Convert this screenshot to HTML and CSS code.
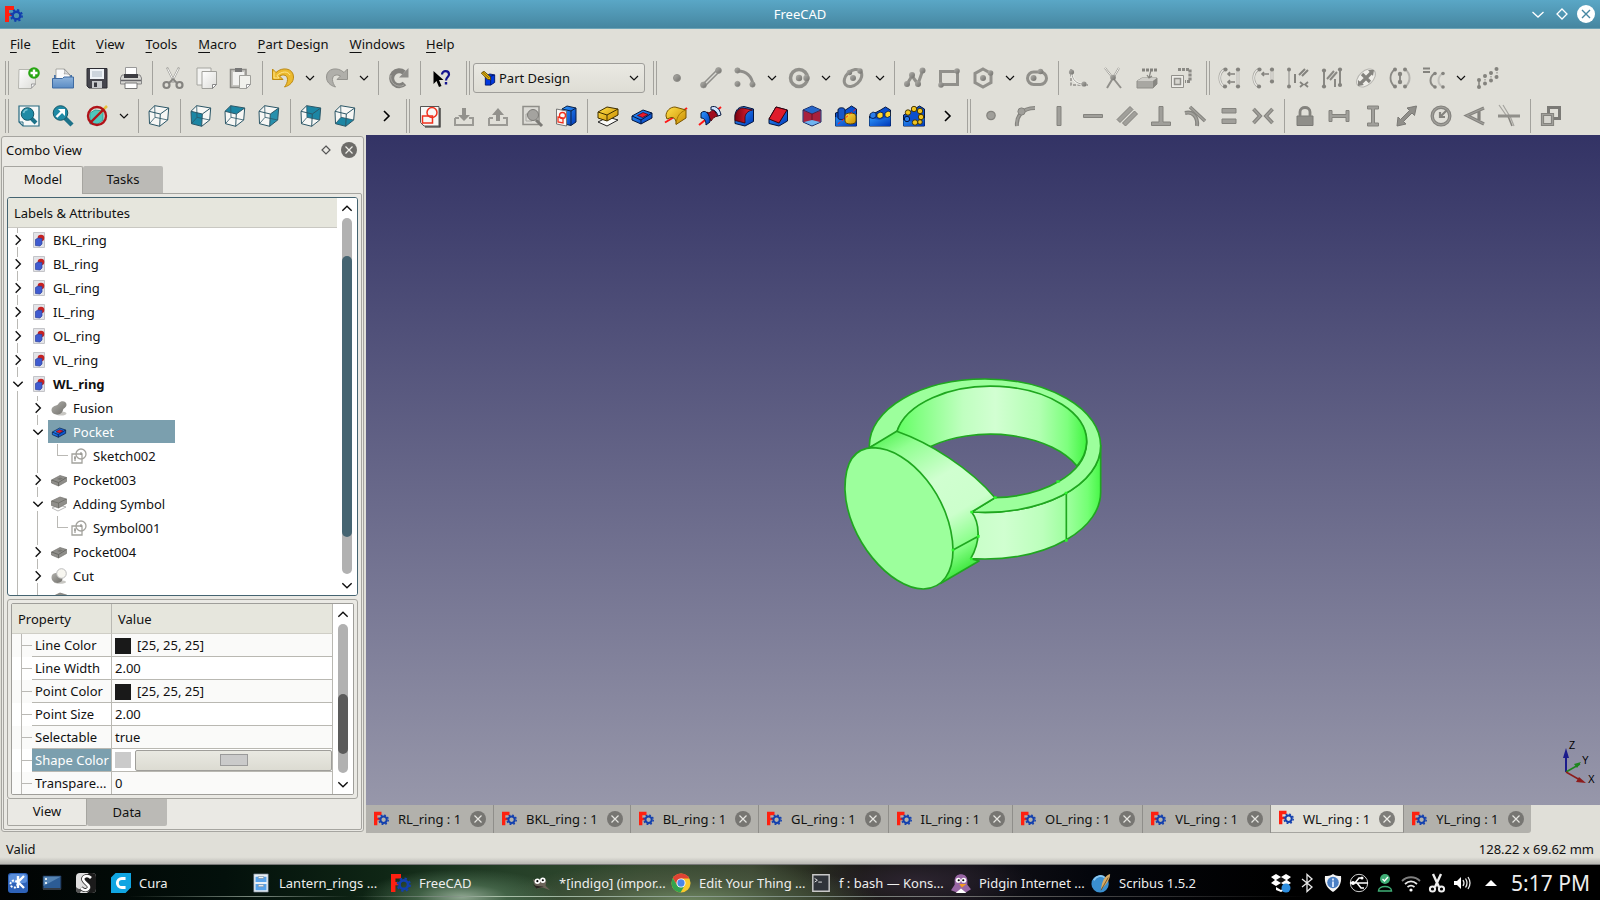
FILE: index.html
```html
<!DOCTYPE html>
<html lang="en">
<head>
<meta charset="utf-8">
<title>FreeCAD</title>
<link rel="stylesheet" href="styles.css">
</head>
<body>
<svg class="sprite" aria-hidden="true">
  <defs>
    <linearGradient id="g-blue" x1="0" y1="0" x2="1" y2="1"><stop offset="0" stop-color="#2f9bff"/><stop offset="1" stop-color="#0037b8"/></linearGradient>
    <linearGradient id="g-gold" x1="0" y1="0" x2="1" y2="1"><stop offset="0" stop-color="#ffe04a"/><stop offset="1" stop-color="#c98c00"/></linearGradient>
    <linearGradient id="g-red" x1="0" y1="0" x2="1" y2="0"><stop offset="0" stop-color="#7a0010"/><stop offset="1" stop-color="#f02838"/></linearGradient>
    <linearGradient id="g-grey" x1="0" y1="0" x2="1" y2="1"><stop offset="0" stop-color="#b2b1ac"/><stop offset="1" stop-color="#6f6e6a"/></linearGradient>
    <linearGradient id="g-page" x1="0" y1="0" x2="1" y2="1"><stop offset="0" stop-color="#fff"/><stop offset="1" stop-color="#dcdcd8"/></linearGradient>
    <linearGradient id="g-folder" x1="0" y1="0" x2="0" y2="1"><stop offset="0" stop-color="#8fb4dc"/><stop offset="1" stop-color="#5b8cc4"/></linearGradient>
    <g id="wire">
      <path d="M7.700 1.700 21.700 4 20.700 16 12.700 22.300 2.500 19.700 2 7.300z" fill="#fff" fill-opacity=".75"/>
    </g>
    <g id="edges" fill="none" stroke="#2c5767" stroke-width="1" stroke-linejoin="round">
      <path d="M7.700 1.700 21.700 4 20.700 16 12.700 22.300 2.500 19.700 2 7.300zM2 7.300 13.300 10 21.700 4M13.300 10 12.700 22.300"/>
      <path d="M7.700 1.700 8 13.300 20.700 16M8 13.300 2.500 19.700" stroke-width=".8"/>
    </g>
    <symbol id="freecad" viewBox="0 0 18 18"><path d="M0 1h9v4H4v3h3v3H4v6H0z" fill="#ff2010"/><circle cx="11.500" cy="10.500" r="3.800" fill="none" stroke="#123fae" stroke-width="2.400"/><circle cx="11.500" cy="10.500" r="5.600" fill="none" stroke="#123fae" stroke-width="1.700" stroke-dasharray="2.200 2.198"/></symbol>
    <symbol id="chev-d" viewBox="0 0 12 12"><path d="M2 4l4 4 4-4" fill="none" stroke="currentColor" stroke-width="1.200"/></symbol>
    <symbol id="chev-u" viewBox="0 0 12 12"><path d="M2 8l4-4 4 4" fill="none" stroke="currentColor" stroke-width="1.200"/></symbol>
    <symbol id="chev-r" viewBox="0 0 12 12"><path d="M4 2l4 4-4 4" fill="none" stroke="currentColor" stroke-width="1.200"/></symbol>
    <symbol id="more" viewBox="0 0 16 16"><path d="M5 3l5 5-5 5" fill="none" stroke="#000" stroke-width="1.600"/></symbol>
    <symbol id="close" viewBox="0 0 16 16"><circle cx="8" cy="8" r="8" fill="#6d6c69"/><path d="M4.500 4.500l7 7m0-7l-7 7" stroke="#f0efea" stroke-width="1.200"/></symbol>
    <symbol id="new" viewBox="0 0 24 24"><path d="M2 3.500h16.500V18l-4.500 4.500H1.500z" fill="url(#g-page)" stroke="#b5b5af"/><path d="M14 22.500c1-1 .5-3 .5-4.500h4z" fill="#fff" stroke="#999"/><circle cx="17" cy="7" r="5.800" fill="#27a611"/><path d="M17 3.500v7M13.500 7h7" stroke="#fff" stroke-width="2.400"/></symbol>
    <symbol id="open" viewBox="0 0 24 24"><path d="M3 9h18v12H3z" fill="#4673aa"/><path d="M5 13V3h8.500l5.500 6v5z" fill="#fafafa" stroke="#9a9a96" stroke-width=".8"/><path d="M13 3c1 2 1 4 0 5 2-.5 4 0 6 1z" fill="#ddd" stroke="#888" stroke-width=".6"/><path d="M1.500 12.500h10l1.500-1.500h9.500V22h-21z" fill="url(#g-folder)" stroke="#3f6ba2"/></symbol>
    <symbol id="save" viewBox="0 0 24 24"><path d="M2 2.500h20V22H4l-2-2z" fill="#45454d" stroke="#2c2c33"/><path d="M5 3h14v10H5z" fill="#eef2f6"/><path d="M7 6h10M7 8h10M7 10h10" stroke="#9aa8b8" stroke-width=".8"/><path d="M7 15h10v7H7z" fill="#c7c9cc"/><path d="M9 16.500h3V21H9z" fill="#3a3a42"/></symbol>
    <symbol id="print" viewBox="0 0 24 24"><path d="M6.500 1.500h11V10h-11z" fill="#fff" stroke="#999"/><path d="M3 9h18l1.500 3v6h-21v-6z" fill="#d6d6d2" stroke="#888"/><path d="M5 8h14v4H5z" fill="#3d3d42"/><path d="M6 17h12v5.500H6z" fill="#fff" stroke="#777"/><path d="M2 14.500h20" stroke="#66666a" stroke-width="1.500"/></symbol>
    <symbol id="cut" viewBox="0 0 24 24"><path d="M6 1.500l7.500 15M18 1.500l-7.500 15" stroke="#a3a29e" stroke-width="2.200"/><path d="M6.500 2.500l6.500 13M17.500 2.500l-6.500 13" stroke="#f4f4f2" stroke-width="1"/><circle cx="5.500" cy="19" r="3" fill="none" stroke="#858480" stroke-width="2.200"/><circle cx="18.500" cy="19" r="3" fill="none" stroke="#858480" stroke-width="2.200"/><path d="M8 17l4-4 4 4" stroke="#858480" stroke-width="1.800" fill="none"/></symbol>
    <symbol id="copy" viewBox="0 0 24 24"><path d="M2 2h14v17H2z" fill="#f3f3f1" stroke="#a5a5a0"/><path d="M7 5.500h14.500v13l-4 4H7z" fill="url(#g-page)" stroke="#a0a09b"/><path d="M17.500 22.500v-4h4z" fill="#fff" stroke="#888"/></symbol>
    <symbol id="paste" viewBox="0 0 24 24"><path d="M1.500 3.500H17v18H1.500z" fill="#c6c5c0" stroke="#8d8c87" stroke-width="1.500"/><path d="M4 6h11v13H4z" fill="#f2f2f0"/><path d="M6 2h7v4H6z" fill="#777"/><path d="M10.500 9.500h11v9l-4 4h-7z" fill="#f1f1ec" stroke="#a0a09b"/><path d="M17.500 22.500v-4h4z" fill="#fff" stroke="#999"/></symbol>
    <symbol id="undo" viewBox="0 0 24 24"><path d="M1.500 3v10.500H12L8.500 10c4-2 8-1 8 3.500 0 3-1.500 5.500-3 7.500 5.500-1.500 9-5 9-10C22.500 2 11 .5 5 6.500z" fill="#ecba2f" stroke="#bd8910" stroke-linejoin="round"/><path d="M3 5.500v6.500h5L6 9.500C11 5 17 5 19 9" fill="none" stroke="#ffe58b" stroke-width="1"/></symbol>
    <symbol id="redo" viewBox="0 0 24 24"><path d="M22.500 3v10.500H12l3.500-3.500c-4-2-8-1-8 3.500 0 3 1.500 5.500 3 7.500-5.500-1.500-9-5-9-10C1.500 2 13 .5 19 6.500z" fill="#b0afaa" stroke="#94938e" stroke-linejoin="round"/></symbol>
    <symbol id="refresh" viewBox="0 0 24 24"><path d="M17.500 17.500A7.500 7.500 0 1 1 17 6.500" fill="none" stroke="#82817d" stroke-width="5"/><path d="M21.500 2v9.500H12z" fill="#8e8d89"/><path d="M17 19A9 9 0 0 1 4 9" fill="none" stroke="#aaa9a4" stroke-width="1"/></symbol>
    <symbol id="whats" viewBox="0 0 24 24"><path d="M4.500 5v13l3-3 2.500 6 2.500-1-2.500-6h4.500z" fill="#000"/><path d="M13 8.500c0-4.500 7-4.500 7 0 0 2.500-3 2.500-3 6" fill="none" stroke="#12128e" stroke-width="2.200"/><path d="M15.800 16h2.400v2.500h-2.400z" fill="#12128e"/></symbol>
    <symbol id="pd" viewBox="0 0 18 18"><path d="M6 7l5-2.500 5.500 1V14L12 17H6z" fill="#0038e0" stroke="#001468"/><path d="M6 7h6v10M12 7l4.500-1.500" fill="none" stroke="#001468"/><path d="M1.500 3.500L4.500 1.500l7 6 .5 3.500-3.500-.5z" fill="#eab70e" stroke="#5b4400"/><path d="M3 2.500L10 9" stroke="#6c5000"/></symbol>
    <symbol id="point" viewBox="0 0 24 24"><circle cx="12" cy="12" r="3.500" fill="url(#g-grey)" stroke="#91908b"/></symbol>
    <symbol id="line" viewBox="0 0 24 24"><path d="M5 19L19.500 4.500" stroke="#8f8e8a" stroke-width="4.500"/><path d="M5 19L19.500 4.500" stroke="#dcdbd5" stroke-width="1.500"/><g fill="url(#g-grey)" stroke="#91908b" stroke-width=".6"><circle cx="4.500" cy="19" r="3"/><circle cx="19.500" cy="4.500" r="3"/></g></symbol>
    <symbol id="arc" viewBox="0 0 24 24"><path d="M5 5C13 5 19 10 20 19" fill="none" stroke="#8f8e8a" stroke-width="3"/><g fill="url(#g-grey)" stroke="#91908b" stroke-width=".6"><circle cx="4.500" cy="4.500" r="2.700"/><circle cx="19.500" cy="18.500" r="2.700"/><circle cx="4.500" cy="18" r="2.700"/></g></symbol>
    <symbol id="circle" viewBox="0 0 24 24"><circle cx="12" cy="12" r="8.500" fill="none" stroke="#91908b" stroke-width="3.500"/><g fill="url(#g-grey)"><circle cx="12" cy="12" r="3.200"/><circle cx="19.500" cy="12" r="3.200"/></g></symbol>
    <symbol id="ellipse" viewBox="0 0 24 24"><ellipse cx="12" cy="12" rx="10" ry="7" transform="rotate(-42 12 12)" fill="none" stroke="#91908b" stroke-width="3"/><g fill="url(#g-grey)"><circle cx="12" cy="12" r="3"/><circle cx="8.500" cy="6.500" r="2.700"/><circle cx="19" cy="5" r="2.700"/></g></symbol>
    <symbol id="poly" viewBox="0 0 24 24"><path d="M4 18L9 10l6 8 4.500-13" fill="none" stroke="#91908b" stroke-width="3"/><g fill="url(#g-grey)"><circle cx="4" cy="18" r="3"/><circle cx="9" cy="9" r="3"/><circle cx="15" cy="18" r="3"/><circle cx="19.500" cy="4.500" r="3"/></g></symbol>
    <symbol id="rect" viewBox="0 0 24 24"><path d="M3.500 5.500h17v13h-17z" fill="none" stroke="#91908b" stroke-width="3"/><g fill="url(#g-grey)"><circle cx="4" cy="19" r="2.800"/><circle cx="20" cy="5" r="2.800"/></g></symbol>
    <symbol id="hex" viewBox="0 0 24 24"><path d="M12 3l8 4.500v9L12 21l-8-4.500v-9z" fill="none" stroke="#91908b" stroke-width="3"/><g fill="url(#g-grey)"><circle cx="12" cy="12" r="3"/><circle cx="19.500" cy="7" r="2.800"/></g></symbol>
    <symbol id="slot" viewBox="0 0 24 24"><rect x="2.500" y="6" width="19" height="12.500" rx="6.200" fill="none" stroke="#91908b" stroke-width="3"/><g fill="url(#g-grey)"><circle cx="8.500" cy="12" r="3"/><circle cx="15.500" cy="5.500" r="2.800"/></g></symbol>
    <symbol id="filletsk" viewBox="0 0 24 24"><path d="M4 3v16h17" fill="none" stroke="#91908b" stroke-width="1.500" stroke-dasharray="3 1.500"/><path d="M5 7c0 7 5 11 11 11" fill="none" stroke="#f4f3ee" stroke-width="2.500"/><path d="M5 7c0 7 5 11 11 11" fill="none" stroke="#91908b" stroke-width=".8"/><g fill="url(#g-grey)"><circle cx="4.500" cy="6" r="2.600"/><circle cx="17" cy="18" r="2.600"/></g></symbol>
    <symbol id="trim" viewBox="0 0 24 24"><path d="M4 2l16 20M18 2L6 22" stroke="#91908b" stroke-width="2"/><path d="M4 2l8 10M18 2l-6 10" stroke="#f4f3ee" stroke-width="1"/><circle cx="12" cy="11.500" r="2.800" fill="url(#g-grey)"/></symbol>
    <symbol id="ext" viewBox="0 0 24 24"><path d="M2 15l5-3h15v6l-4 4H2z" fill="#a8a7a2" stroke="#8f8e89"/><path d="M2 15l5-3h15l-4 3z" fill="#cfcec9"/><path d="M18 15v7l4-4v-6z" fill="#888782"/><path d="M7 4h15" stroke="#84837e" stroke-width="3" stroke-dasharray="3 1"/><path d="M16 4l-2 8m-2-3l2 3 3-2" fill="none" stroke="#84837e" stroke-width="1.200"/></symbol>
    <symbol id="carbon" viewBox="0 0 24 24"><path d="M9 3.500h12v12h-5" fill="none" stroke="#8b8a85" stroke-width="3.200" stroke-dasharray="3 1"/><path d="M2.500 9.500h12v12h-12z" fill="#eeede8" stroke="#91908b"/><path d="M5.500 12.500h6v6h-6z" fill="#d8d7d1" stroke="#91908b" stroke-width="1.500"/></symbol>
    <symbol id="sel1" viewBox="0 0 24 24"><path d="M7 3C0 7 0 17 7 21M20 3v18" fill="none" stroke="#a5a49f" stroke-width="2.600"/><path d="M7 3C0 7 0 17 7 21M20 3v18" fill="none" stroke="#eeede8" stroke-width="1.200"/><path d="M10 8h7M10 16h7M12 6l-2 2 2 2M12 14l-2 2 2 2" fill="none" stroke="#84837e" stroke-width="1.600"/><g fill="#84837e"><circle cx="7.500" cy="3.500" r="2.100"/><circle cx="20" cy="3.500" r="2.100"/><circle cx="7" cy="20.500" r="2.100"/><circle cx="20" cy="20.500" r="2.100"/></g></symbol>
    <symbol id="sel2" viewBox="0 0 24 24"><path d="M7 3C0 7 0 17 7 21M20 3v12" fill="none" stroke="#a5a49f" stroke-width="2.600"/><path d="M7 3C0 7 0 17 7 21M20 3v12" fill="none" stroke="#eeede8" stroke-width="1.200"/><path d="M10 8h7M12 6l-2 2 2 2" fill="none" stroke="#84837e" stroke-width="1.600"/><g fill="#84837e"><circle cx="7.500" cy="3.500" r="2.100"/><circle cx="20" cy="3.500" r="2.100"/><circle cx="7" cy="20.500" r="2.100"/><circle cx="20" cy="15.500" r="2.100"/></g></symbol>
    <symbol id="sel3" viewBox="0 0 24 24"><path d="M3 3v18" stroke="#b5b4af" stroke-width="2"/><path d="M9 8v9M13 9l6-6M16 10l6-6" fill="none" stroke="#84837e" stroke-width="2"/><path d="M14 16l3 2.500-3 2.500M22 16l-3 2.500 3 2.500" fill="none" stroke="#84837e" stroke-width="1.800"/><g fill="#84837e"><circle cx="3" cy="3.500" r="2"/><circle cx="3" cy="20.500" r="2"/></g></symbol>
    <symbol id="sel4" viewBox="0 0 24 24"><path d="M4 4v17M20 3v16M15 13v8M7 13l7-8M10 14l7-8" fill="none" stroke="#8a8984" stroke-width="2"/><g fill="#84837e"><circle cx="4" cy="4.500" r="2.100"/><circle cx="4" cy="20.500" r="2.100"/><circle cx="20" cy="3.500" r="2.100"/><circle cx="20" cy="19" r="2.100"/></g></symbol>
    <symbol id="sel5" viewBox="0 0 24 24"><ellipse cx="12" cy="12" rx="11" ry="7" transform="rotate(-42 12 12)" fill="#efeee9" stroke="#b5b4af"/><path d="M6 18L18 6M8 8l8 8" stroke="#84837e" stroke-width="3.200"/><path d="M4 20v-6l6 5zM20 4h-6l5 6z" fill="#84837e"/></symbol>
    <symbol id="sel6" viewBox="0 0 24 24"><path d="M7 3C1 8 1 16 7 21" fill="none" stroke="#8a8984" stroke-width="1.800"/><path d="M17 3c6 5 6 13 0 18" fill="none" stroke="#b5b4af" stroke-width="2"/><path d="M12 8v8" stroke="#84837e" stroke-width="1.800"/><g fill="#84837e"><circle cx="7" cy="3.500" r="2"/><circle cx="17" cy="3.500" r="2"/><circle cx="7" cy="20.500" r="2"/><circle cx="17" cy="20.500" r="2"/><circle cx="12" cy="8" r="2.200"/><circle cx="12" cy="16" r="2.200"/></g></symbol>
    <symbol id="sel7" viewBox="0 0 24 24"><path d="M1 2.500h7M1 6h7" stroke="#84837e" stroke-width="2"/><path d="M13 7c-6 4-6 11 0 14" fill="none" stroke="#8a8984" stroke-width="2"/><path d="M21 7c-6 4-6 11 0 14" fill="none" stroke="#c3c2bd" stroke-width="2"/><g fill="#84837e"><circle cx="13" cy="7.500" r="1.800"/><circle cx="13" cy="21" r="1.800"/><circle cx="21" cy="7.500" r="1.800"/><circle cx="21" cy="21" r="1.800"/></g></symbol>
    <symbol id="sel8" viewBox="0 0 24 24"><path d="M3 14v7" stroke="#84837e" stroke-width="1.500"/><path d="M9 10v7M15 7v7M21 3v8" stroke="#84837e" stroke-dasharray="1.500 1.500"/><g fill="#84837e"><circle cx="3" cy="14" r="2"/><circle cx="3" cy="21" r="2"/><circle cx="9" cy="10" r="2"/><circle cx="9" cy="17.500" r="2"/><circle cx="15" cy="7" r="2"/><circle cx="15" cy="14.500" r="2"/><circle cx="20.500" cy="3" r="2"/><circle cx="20.500" cy="11" r="2"/></g></symbol>
    <symbol id="fit" viewBox="0 0 24 24"><path d="M2 2h20v20H6l-4-4z" fill="#f6f8f8" stroke="#266a80" stroke-width="1.200"/><path d="M2 18h4v4" fill="none" stroke="#266a80"/><path d="M14 14l5 5" stroke="#1d7289" stroke-width="4"/><circle cx="10.500" cy="10" r="6.300" fill="#1f8aa5" stroke="#175868"/><path d="M6.500 9a4.500 4.500 0 0 1 4-3.500" stroke="#7cc6d7" fill="none" stroke-width="1.500"/></symbol>
    <symbol id="zoomsel" viewBox="0 0 24 24"><path d="M14 14l7 7" stroke="#1d7289" stroke-width="4.500"/><circle cx="9.500" cy="9" r="7.300" fill="#1f8aa5" stroke="#175868"/><path d="M5.500 13l6-6" stroke="#fff" stroke-width="2.400"/><path d="M7 5h7v7z" fill="#fff"/></symbol>
    <symbol id="style" viewBox="0 0 24 24"><path d="M5 9l5-3 8 1v9l-5 4H5z" fill="#4fc6bd" stroke="#39a19b"/><path d="M14 10l8-8" stroke="#e7c23c" stroke-width="2.500"/><circle cx="12" cy="12" r="9" fill="none" stroke="#b01218" stroke-width="2.400"/><path d="M5.500 18.500l13-13" stroke="#b01218" stroke-width="2.400"/></symbol>
    <symbol id="iso" viewBox="0 0 24 24"><use href="#wire"/><use href="#edges"/></symbol>
    <symbol id="front" viewBox="0 0 24 24"><use href="#wire"/><path d="M2 7.300 13.300 10 12.700 22.300 2.500 19.700z" fill="#1c86a4"/><use href="#edges"/></symbol>
    <symbol id="top" viewBox="0 0 24 24"><use href="#wire"/><path d="M7.700 1.700 21.700 4 13.300 10 2 7.300z" fill="#1c86a4"/><use href="#edges"/></symbol>
    <symbol id="right" viewBox="0 0 24 24"><use href="#wire"/><path d="M21.700 4 20.700 16 12.700 22.300 13.300 10z" fill="#2790ad"/><use href="#edges"/></symbol>
    <symbol id="rear" viewBox="0 0 24 24"><use href="#wire"/><path d="M7.700 1.700 21.700 4 20.700 16 8 13.300z" fill="#1c86a4"/><use href="#edges"/></symbol>
    <symbol id="bottom" viewBox="0 0 24 24"><use href="#wire"/><path d="M8 13.300 20.700 16 12.700 22.300 2.500 19.700z" fill="#1c86a4"/><use href="#edges"/></symbol>
    <symbol id="sketch" viewBox="0 0 24 24"><path d="M2.500 2.500h18.500v19.500h-15l-3.500-3.500z" fill="#f7f7f5" stroke="#555"/><path d="M22 4v19H7" fill="none" stroke="#222" stroke-width="1.200"/><path d="M4.500 12h10v7h-10z" fill="none" stroke="#f0301c" stroke-width="1.500"/><circle cx="14" cy="8.500" r="5" fill="none" stroke="#f0301c" stroke-width="1.500"/></symbol>
    <symbol id="imp" viewBox="0 0 24 24"><path d="M3 14v7h18v-7h-4M3 14h4" fill="none" stroke="#9b9a95" stroke-width="2"/><path d="M10 4h4v7h4l-6 6-6-6h4z" fill="#92918c"/></symbol>
    <symbol id="exp" viewBox="0 0 24 24"><path d="M3 14v7h18v-7h-4M3 14h4" fill="none" stroke="#9b9a95" stroke-width="2"/><path d="M10 17h4v-6h4l-6-7-6 7h4z" fill="#92918c"/></symbol>
    <symbol id="viewsk" viewBox="0 0 24 24"><path d="M3 2.500h16v18H3z" fill="#dcdbd6" stroke="#8f8e89" stroke-width="1.500"/><path d="M6 10h6v7H6z" fill="none" stroke="#aaa9a4"/><path d="M16 16l6 6" stroke="#7b7a76" stroke-width="3"/><circle cx="13" cy="11" r="5.500" fill="#a4a39f" stroke="#7b7a76"/></symbol>
    <symbol id="mapsk" viewBox="0 0 24 24"><path d="M8 5l5-3 9 2v14l-5 3.500-9-2z" fill="url(#g-blue)" stroke="#0a2146"/><path d="M8 5l9 2 5-3M17 7v14" fill="none" stroke="#0a2146"/><path d="M2.500 5l10 2v15l-10-2z" fill="#f8f8f6" stroke="#777"/><path d="M4 13l5 1v5l-5-1z" fill="none" stroke="#f0301c" stroke-width="1.300"/><circle cx="8.500" cy="11.500" r="3" fill="none" stroke="#f0301c" stroke-width="1.300"/></symbol>
    <symbol id="pad" viewBox="0 0 24 24"><path d="M2 18l10-5 10 3-11 6z" fill="#fafaf8" stroke="#222"/><path d="M2 8l9-5 11 2v6l-11 6-9-3z" fill="url(#g-gold)" stroke="#3f2e00"/><path d="M2 8l9 3 11-6M11 11v6" fill="none" stroke="#3f2e00"/></symbol>
    <symbol id="pocket" viewBox="0 0 24 24"><path d="M2 12l11-6 9 3v5l-11 6-9-4z" fill="url(#g-blue)" stroke="#04163e"/><path d="M2 12l9 4 11-7M11 16v4" fill="none" stroke="#04163e"/><path d="M7.500 11.500l5.500-3 5 2-5.500 3z" fill="#e8192c" stroke="#54000a" stroke-width=".7"/></symbol>
    <symbol id="revol" viewBox="0 0 24 24"><path d="M1 18.500l10-6M15 10l8-6" stroke="#ff1616" stroke-width="2"/><path d="M2 12c0-5 4-9 9-9l11 3v8l-10 6.500c.5-5-2-7.500-5-7l-4 1.500z" fill="url(#g-gold)" stroke="#7a5500" stroke-linejoin="round"/><path d="M12 20c1-8 4-12 10-14" fill="none" stroke="#a37500"/></symbol>
    <symbol id="groove" viewBox="0 0 24 24"><path d="M1 21L23 3" stroke="#ff1616" stroke-width="2"/><path d="M9 8c2 2 5-1 6-3l5 7c-3 0-6 3-7 5z" fill="#a20d20" stroke="#4d000a"/><path d="M3 9c4-4 9 0 9 9l-4 3c0-5-2-7-5-7z" fill="url(#g-blue)" stroke="#04163e"/><path d="M13 3c5-2 9 2 10 8l-3 1c-1-4-4-7-7-6z" fill="#cfe4ff" stroke="#04163e"/></symbol>
    <symbol id="fil3" viewBox="0 0 24 24"><path d="M3 11c1-6 4-8 9-8.500l9.500 2.500v12.500L13 22 3 19.500z" fill="url(#g-blue)" stroke="#04163e"/><path d="M3 16.500V12c1-5 4-8 8-8l9.500 2c-5 1-7.500 4-7.500 8v5z" fill="url(#g-red)" stroke="#3c0008" stroke-width=".8"/></symbol>
    <symbol id="cham" viewBox="0 0 24 24"><path d="M3 15l7-12 11.500 3v11L13 22 3 19.500z" fill="url(#g-blue)" stroke="#04163e"/><path d="M3 15l7-12 11 3-8 13z" fill="#e01c2c" stroke="#3c0008"/></symbol>
    <symbol id="draft" viewBox="0 0 24 24"><path d="M3 6l9-4 9 4v12l-9 4-9-4z" fill="#2f64c4" stroke="#172c66"/><path d="M3.500 7l8.500 3 8.500-3v11l-8.500 1-8.500-1z" fill="#a8203c"/><path d="M4 6l8-3.500L20 6l-8 3z" fill="#2565c8"/><path d="M3 6l9 4 9-4M12 10v12" fill="none" stroke="#541024" stroke-width=".8"/><path d="M4 18l8-2 8 2-8 3.500z" fill="#6fb4f0"/></symbol>
    <symbol id="mir" viewBox="0 0 24 24"><path d="M1.500 9l10-3 6-4 5 3v17h-21z" fill="#0a4fd0" stroke="#04163e"/><path d="M1.500 13l9 3 12-6v12h-21z" fill="url(#g-blue)"/><path d="M4 6c0-3 7-3 7 0v8c0 2-7 2-7 0z" fill="#1a57c8" stroke="#04163e"/><path d="M11 12c0-4 11-4 11 0v5c0 4-11 4-11 0z" fill="url(#g-gold)" stroke="#5b4400"/><path d="M4 20L22 5" stroke="#ff2020" stroke-dasharray="3 2"/></symbol>
    <symbol id="lin" viewBox="0 0 24 24"><path d="M1.500 12l11-6 5-3 5 3v16h-21z" fill="#0a4fd0" stroke="#04163e"/><path d="M1.500 14l10 2 11-4v10h-21z" fill="url(#g-blue)"/><g stroke="#04163e" stroke-width=".8"><path d="M2 10l3-2 3 1v4l-3 1.500-3-1z" fill="#2a7cec"/><path d="M9 10l3-2 3 1v4l-3 1.500-3-1zM17 9l3-2 2.500 1v4l-3 1.500-2.500-1z" fill="#ffd52e"/></g></symbol>
    <symbol id="pol" viewBox="0 0 24 24"><path d="M1.500 11l11-6 5-3 5 3v17h-21z" fill="#0a4fd0" stroke="#04163e"/><path d="M1.500 16l10 2 11-4v8h-21z" fill="url(#g-blue)"/><g fill="#f2c51f" stroke="#3a2b00" stroke-width=".9"><circle cx="6" cy="8.500" r="2.700"/><circle cx="12" cy="5" r="2.700"/><circle cx="18" cy="7" r="2.700"/><circle cx="19" cy="13" r="2.700"/><circle cx="13" cy="18.500" r="2.700"/><circle cx="18" cy="18" r="2.300"/></g><circle cx="5" cy="15" r="2.700" fill="#2a7cec" stroke="#04163e"/></symbol>
    <symbol id="cpoint" viewBox="0 0 24 24"><circle cx="12" cy="11.500" r="4.200" fill="#a09f9a" stroke="#84837e" stroke-width="1.200"/></symbol>
    <symbol id="ctan" viewBox="0 0 24 24"><path d="M4 22C3 14 8 4 22 4" fill="none" stroke="#84837e" stroke-width="4"/><path d="M4 22C3 14 8 4 22 4" fill="none" stroke="#a09f9a" stroke-width="1.800"/><circle cx="8.500" cy="7.500" r="3.600" fill="#a09f9a" stroke="#84837e"/></symbol>
    <symbol id="cvert" viewBox="0 0 24 24"><path d="M10 2.500h4v19h-4z" fill="#a09f9a" stroke="#84837e"/></symbol>
    <symbol id="choriz" viewBox="0 0 24 24"><path d="M2.500 10.500h19v3h-19z" fill="#a09f9a" stroke="#84837e"/></symbol>
    <symbol id="cpar" viewBox="0 0 24 24"><path d="M2 15.500L15 2.500l3 3-13 13zM7.500 19L19.500 7l3 3-12 12z" fill="#a09f9a" stroke="#84837e"/></symbol>
    <symbol id="cperp" viewBox="0 0 24 24"><path d="M10 2.500h4V18h7.500v3.500h-19V18H10z" fill="#a09f9a" stroke="#84837e"/></symbol>
    <symbol id="ctang" viewBox="0 0 24 24"><path d="M7 3l15 14" stroke="#84837e" stroke-width="3.500"/><path d="M2 9c8-2 13 4 12 13" fill="none" stroke="#84837e" stroke-width="4"/><path d="M2 9c8-2 13 4 12 13M7 3l15 14" fill="none" stroke="#a09f9a" stroke-width="1.600"/></symbol>
    <symbol id="ceq" viewBox="0 0 24 24"><path d="M5 4.500h14V9H5zM5 15h14v4.500H5z" fill="#a09f9a" stroke="#84837e"/></symbol>
    <symbol id="csym" viewBox="0 0 24 24"><path d="M2.500 5L9 12l-6.500 7M21.500 5L15 12l6.500 7" fill="none" stroke="#84837e" stroke-width="3.800"/><path d="M2.500 5L9 12l-6.500 7M21.500 5L15 12l6.500 7" fill="none" stroke="#a09f9a" stroke-width="1.600"/></symbol>
    <symbol id="clock" viewBox="0 0 24 24"><path d="M4 12h16v9.500H4z" fill="#8f8e89" stroke="#7b7a76"/><path d="M7 12V8c0-6 10-6 10 0v4" fill="none" stroke="#84837e" stroke-width="2.800"/></symbol>
    <symbol id="cdx" viewBox="0 0 24 24"><path d="M2 6.500h3v4h14v-4h3v11h-3v-4H5v4H2z" fill="#a09f9a" stroke="#84837e"/></symbol>
    <symbol id="cdy" viewBox="0 0 24 24"><path d="M6.500 2v3h4v14h-4v3h11v-3h-4V5h4V2z" fill="#a09f9a" stroke="#84837e"/></symbol>
    <symbol id="cdist" viewBox="0 0 24 24"><path d="M2 22l1-9 2.500 2.500 9-9L12 4l9.500-2-2 9.500-2.500-2.500-8.500 8.500L11 20z" fill="#908f8a" stroke="#7b7a76"/></symbol>
    <symbol id="crad" viewBox="0 0 24 24"><circle cx="12" cy="12" r="8.800" fill="none" stroke="#84837e" stroke-width="3.400"/><circle cx="12" cy="12" r="8.800" fill="none" stroke="#a09f9a" stroke-width="1.200"/><path d="M12 12l6-6M11 8v5h5" stroke="#84837e" stroke-width="2.200" fill="none"/></symbol>
    <symbol id="cang" viewBox="0 0 24 24"><path d="M21 4L4 11.500 21 20M16 7v9" fill="none" stroke="#84837e" stroke-width="3.200"/><path d="M21 4L4 11.500 21 20" fill="none" stroke="#a09f9a" stroke-width="1.200"/></symbol>
    <symbol id="csnell" viewBox="0 0 24 24"><path d="M2 1l7 10M6 1l6 10M13 12l4 10" stroke="#a5a49f" stroke-width="1.200"/><path d="M11 12l4 10" stroke="#84837e" stroke-width="1.600"/><path d="M1 10.500h22v3H1z" fill="#908f8a"/></symbol>
    <symbol id="calt" viewBox="0 0 24 24"><path d="M9.500 3.500h11v11h-11z" fill="none" stroke="#7b7a76" stroke-width="3"/><path d="M3.500 10.500h10v10h-10z" fill="#d6d5cf" stroke="#84837e" stroke-width="3.200"/><path d="M3.500 10.500h10v10h-10z" fill="none" stroke="#a09f9a" stroke-width="1.200"/></symbol>
    <symbol id="t-doc" viewBox="0 0 16 16"><path d="M2.500.5h11v15h-11z" fill="#e3e4e8" stroke="#c4c4c8"/><circle cx="10" cy="6" r="3.300" fill="#c62222"/><path d="M4.500 7.500l2.500-1.500 4 .5v5.500L9 14l-4.500-.5z" fill="#3f5bd0" stroke="#2b3f9c" stroke-width=".7"/></symbol>
    <symbol id="t-fusion" viewBox="0 0 16 16"><ellipse cx="10" cy="13.500" rx="5.500" ry="2" fill="#c8c7c3"/><path d="M8 3c2-3 8-2 7.500 2-.5 3-3 3-3.500 5-1 6-11 6-11.500.5C.5 7 3 6 5 5.500 7 5 7 4 8 3z" fill="url(#g-grey)"/></symbol>
    <symbol id="t-pad" viewBox="0 0 16 16"><path d="M1 12l7-3 7 2-8 4z" fill="#fff" stroke="#999" stroke-width=".7"/><path d="M.5 5L9 1l6.500 2v4.500L7.500 12l-7-2.500z" fill="#8f8e8a" stroke="#74736f" stroke-width=".7"/><path d="M.5 5L7.500 7l8-4M7.500 7v5" fill="none" stroke="#66655f" stroke-width=".7"/></symbol>
    <symbol id="t-pocket" viewBox="0 0 16 16"><path d="M.5 8L9 3.500l6.500 2V9.500L7.500 14l-7-3z" fill="#8f8e8a" stroke="#74736f" stroke-width=".7"/><path d="M.5 8l7 2.500 8-5M7.500 10.500V14" fill="none" stroke="#605f5a" stroke-width=".8"/><path d="M6 7l3-1.500 3 1-3 1.500z" fill="#777671"/></symbol>
    <symbol id="t-sketch" viewBox="0 0 16 16"><path d="M1 6h10v9H1z" fill="none" stroke="#a3a29d" stroke-width="1.300"/><circle cx="10" cy="6" r="5" fill="none" stroke="#a3a29d" stroke-width="1.300"/><path d="M4 8v5M3 10h2M10 4v3" stroke="#84837e" stroke-width="1"/></symbol>
    <symbol id="t-cut" viewBox="0 0 16 16"><ellipse cx="9" cy="14" rx="6" ry="1.800" fill="#c8c7c3"/><path d="M.5 9.500C.5 6 3 5 5.500 5l6 5.500c0 6-11 6-11-1z" fill="url(#g-grey)"/><circle cx="10.500" cy="5.500" r="4.800" fill="#f7f6f0" stroke="#bbb"/></symbol>
  </defs>
</svg>

<div class="app">
  <header class="titlebar">
    <svg class="logo"><use href="#freecad"/></svg>
    <h1>FreeCAD</h1>
    <div class="winctl">
      <button aria-label="Minimize"><svg viewBox="0 0 18 18"><path d="M3.500 7l5.500 5 5.500-5" fill="none" stroke="#fff" stroke-width="1.300"/></svg></button>
      <button aria-label="Restore"><svg viewBox="0 0 18 18"><path d="M9 4l5 5-5 5-5-5z" fill="none" stroke="#fff" stroke-width="1.300"/></svg></button>
      <button aria-label="Close window"><svg viewBox="0 0 18 18"><circle cx="9" cy="9" r="9" fill="#fff"/><path d="M5 5l8 8m0-8l-8 8" stroke="#4687a2" stroke-width="1.400"/></svg></button>
    </div>
  </header>

  <nav class="menubar">
    <button><u>F</u>ile</button><button><u>E</u>dit</button><button><u>V</u>iew</button><button><u>T</u>ools</button><button><u>M</u>acro</button><button><u>P</u>art Design</button><button><u>W</u>indows</button><button><u>H</u>elp</button>
  </nav>

  <div class="toolrow">
    <i class="grip first"></i>
    <button class="tb" aria-label="New"><svg><use href="#new"/></svg></button>
    <button class="tb" aria-label="Open"><svg><use href="#open"/></svg></button>
    <button class="tb" aria-label="Save"><svg><use href="#save"/></svg></button>
    <button class="tb" aria-label="Print"><svg><use href="#print"/></svg></button>
    <i class="sep"></i>
    <button class="tb" aria-label="Cut"><svg><use href="#cut"/></svg></button>
    <button class="tb" aria-label="Copy"><svg><use href="#copy"/></svg></button>
    <button class="tb" aria-label="Paste"><svg><use href="#paste"/></svg></button>
    <i class="sep"></i>
    <button class="tb" aria-label="Undo"><svg><use href="#undo"/></svg></button>
    <button class="drop" aria-label="Undo list"><svg><use href="#chev-d"/></svg></button>
    <button class="tb" aria-label="Redo"><svg><use href="#redo"/></svg></button>
    <button class="drop" aria-label="Redo list"><svg><use href="#chev-d"/></svg></button>
    <i class="sep"></i>
    <button class="tb" aria-label="Refresh"><svg><use href="#refresh"/></svg></button>
    <i class="sep"></i>
    <button class="tb" aria-label="What's this"><svg><use href="#whats"/></svg></button>
    <i class="grip"></i>
    <div class="combo">
      <svg class="combo-icon"><use href="#pd"/></svg>
      <select aria-label="Workbench"><option>Part Design</option></select>
      <svg class="combo-arrow"><use href="#chev-d"/></svg>
    </div>
    <i class="grip"></i>
    <button class="tb" aria-label="Point"><svg><use href="#point"/></svg></button>
    <button class="tb" aria-label="Line"><svg><use href="#line"/></svg></button>
    <button class="tb" aria-label="Arc"><svg><use href="#arc"/></svg></button>
    <button class="drop" aria-label="Arc types"><svg><use href="#chev-d"/></svg></button>
    <button class="tb" aria-label="Circle"><svg><use href="#circle"/></svg></button>
    <button class="drop" aria-label="Circle types"><svg><use href="#chev-d"/></svg></button>
    <button class="tb" aria-label="Ellipse"><svg><use href="#ellipse"/></svg></button>
    <button class="drop" aria-label="Ellipse types"><svg><use href="#chev-d"/></svg></button>
    <i class="sep"></i>
    <button class="tb" aria-label="Polyline"><svg><use href="#poly"/></svg></button>
    <button class="tb" aria-label="Rectangle"><svg><use href="#rect"/></svg></button>
    <button class="tb" aria-label="Polygon"><svg><use href="#hex"/></svg></button>
    <button class="drop" aria-label="Polygon types"><svg><use href="#chev-d"/></svg></button>
    <button class="tb" aria-label="Slot"><svg><use href="#slot"/></svg></button>
    <i class="sep"></i>
    <button class="tb" aria-label="Sketch fillet"><svg><use href="#filletsk"/></svg></button>
    <button class="tb" aria-label="Trim"><svg><use href="#trim"/></svg></button>
    <button class="tb" aria-label="External geometry"><svg><use href="#ext"/></svg></button>
    <button class="tb" aria-label="Construction mode"><svg><use href="#carbon"/></svg></button>
    <i class="grip"></i>
    <button class="tb" aria-label="Close shape"><svg><use href="#sel1"/></svg></button>
    <button class="tb" aria-label="Connect edges"><svg><use href="#sel2"/></svg></button>
    <button class="tb" aria-label="Select constraints"><svg><use href="#sel3"/></svg></button>
    <button class="tb" aria-label="Select elements"><svg><use href="#sel4"/></svg></button>
    <button class="tb" aria-label="Internal geometry"><svg><use href="#sel5"/></svg></button>
    <button class="tb" aria-label="Symmetry"><svg><use href="#sel6"/></svg></button>
    <button class="tb" aria-label="Clone"><svg><use href="#sel7"/></svg></button>
    <button class="drop" aria-label="Clone types"><svg><use href="#chev-d"/></svg></button>
    <button class="tb" aria-label="Rectangular array"><svg><use href="#sel8"/></svg></button>
  </div>

  <div class="toolrow">
    <i class="grip first"></i>
    <button class="tb" aria-label="Fit all"><svg><use href="#fit"/></svg></button>
    <button class="tb" aria-label="Fit selection"><svg><use href="#zoomsel"/></svg></button>
    <button class="tb" aria-label="Draw style"><svg><use href="#style"/></svg></button>
    <button class="drop" aria-label="Draw styles"><svg><use href="#chev-d"/></svg></button>
    <i class="sep"></i>
    <button class="tb" aria-label="Axonometric"><svg><use href="#iso"/></svg></button>
    <i class="sep"></i>
    <button class="tb" aria-label="Front"><svg><use href="#front"/></svg></button>
    <button class="tb" aria-label="Top"><svg><use href="#top"/></svg></button>
    <button class="tb" aria-label="Right"><svg><use href="#right"/></svg></button>
    <i class="sep"></i>
    <button class="tb" aria-label="Rear"><svg><use href="#rear"/></svg></button>
    <button class="tb" aria-label="Bottom"><svg><use href="#bottom"/></svg></button>
    <button class="more wide" aria-label="More views"><svg><use href="#more"/></svg></button>
    <i class="grip"></i>
    <button class="tb" aria-label="Create sketch"><svg><use href="#sketch"/></svg></button>
    <button class="tb" aria-label="Import"><svg><use href="#imp"/></svg></button>
    <button class="tb" aria-label="Leave sketch"><svg><use href="#exp"/></svg></button>
    <button class="tb" aria-label="View sketch"><svg><use href="#viewsk"/></svg></button>
    <button class="tb" aria-label="Map sketch"><svg><use href="#mapsk"/></svg></button>
    <i class="sep"></i>
    <button class="tb" aria-label="Pad"><svg><use href="#pad"/></svg></button>
    <button class="tb" aria-label="Pocket"><svg><use href="#pocket"/></svg></button>
    <button class="tb" aria-label="Revolution"><svg><use href="#revol"/></svg></button>
    <button class="tb" aria-label="Groove"><svg><use href="#groove"/></svg></button>
    <button class="tb" aria-label="Fillet"><svg><use href="#fil3"/></svg></button>
    <button class="tb" aria-label="Chamfer"><svg><use href="#cham"/></svg></button>
    <button class="tb" aria-label="Draft"><svg><use href="#draft"/></svg></button>
    <button class="tb" aria-label="Mirrored"><svg><use href="#mir"/></svg></button>
    <button class="tb" aria-label="Linear pattern"><svg><use href="#lin"/></svg></button>
    <button class="tb" aria-label="Polar pattern"><svg><use href="#pol"/></svg></button>
    <button class="more" aria-label="More features"><svg><use href="#more"/></svg></button>
    <i class="grip"></i>
    <button class="tb" aria-label="Coincident"><svg><use href="#cpoint"/></svg></button>
    <button class="tb" aria-label="Point on object"><svg><use href="#ctan"/></svg></button>
    <button class="tb" aria-label="Vertical"><svg><use href="#cvert"/></svg></button>
    <button class="tb" aria-label="Horizontal"><svg><use href="#choriz"/></svg></button>
    <button class="tb" aria-label="Parallel"><svg><use href="#cpar"/></svg></button>
    <button class="tb" aria-label="Perpendicular"><svg><use href="#cperp"/></svg></button>
    <button class="tb" aria-label="Tangent"><svg><use href="#ctang"/></svg></button>
    <button class="tb" aria-label="Equal"><svg><use href="#ceq"/></svg></button>
    <button class="tb" aria-label="Symmetric"><svg><use href="#csym"/></svg></button>
    <i class="sep"></i>
    <button class="tb" aria-label="Lock"><svg><use href="#clock"/></svg></button>
    <button class="tb" aria-label="Horizontal distance"><svg><use href="#cdx"/></svg></button>
    <button class="tb" aria-label="Vertical distance"><svg><use href="#cdy"/></svg></button>
    <button class="tb" aria-label="Distance"><svg><use href="#cdist"/></svg></button>
    <button class="tb" aria-label="Radius"><svg><use href="#crad"/></svg></button>
    <button class="tb" aria-label="Angle"><svg><use href="#cang"/></svg></button>
    <button class="tb" aria-label="Refraction"><svg><use href="#csnell"/></svg></button>
    <i class="sep"></i>
    <button class="tb" aria-label="Toggle reference"><svg><use href="#calt"/></svg></button>
  </div>

  <main class="work">
    <aside class="dock">
      <div class="dock-title">
        <h2>Combo View</h2>
        <button aria-label="Float panel"><svg viewBox="0 0 16 16"><path d="M8 4l4 4-4 4-4-4z" fill="none" stroke="#555" stroke-width="1.200"/></svg></button>
        <button aria-label="Close panel"><svg><use href="#close"/></svg></button>
      </div>
      <div class="tabs top"><button class="tab on">Model</button><button class="tab">Tasks</button></div>
      <div class="pane">
        <section class="tree">
          <div class="tree-main">
            <div class="tree-head">Labels &amp; Attributes</div>
            <div class="rows" role="tree">
              <div class="row"><span class="cell ln"><button class="exp" aria-label="Expand"><svg><use href="#chev-r"/></svg></button></span><span class="item"><svg><use href="#t-doc"/></svg>BKL_ring</span></div>
              <div class="row"><span class="cell ln"><button class="exp" aria-label="Expand"><svg><use href="#chev-r"/></svg></button></span><span class="item"><svg><use href="#t-doc"/></svg>BL_ring</span></div>
              <div class="row"><span class="cell ln"><button class="exp" aria-label="Expand"><svg><use href="#chev-r"/></svg></button></span><span class="item"><svg><use href="#t-doc"/></svg>GL_ring</span></div>
              <div class="row"><span class="cell ln"><button class="exp" aria-label="Expand"><svg><use href="#chev-r"/></svg></button></span><span class="item"><svg><use href="#t-doc"/></svg>IL_ring</span></div>
              <div class="row"><span class="cell ln"><button class="exp" aria-label="Expand"><svg><use href="#chev-r"/></svg></button></span><span class="item"><svg><use href="#t-doc"/></svg>OL_ring</span></div>
              <div class="row"><span class="cell ln"><button class="exp" aria-label="Expand"><svg><use href="#chev-r"/></svg></button></span><span class="item"><svg><use href="#t-doc"/></svg>VL_ring</span></div>
              <div class="row"><span class="cell ln"><button class="exp" aria-label="Collapse"><svg><use href="#chev-d"/></svg></button></span><span class="item bold"><svg><use href="#t-doc"/></svg>WL_ring</span></div>
              <div class="row"><span class="cell ln"></span><span class="cell ln"><button class="exp" aria-label="Expand"><svg><use href="#chev-r"/></svg></button></span><span class="item"><svg><use href="#t-fusion"/></svg>Fusion</span></div>
              <div class="row"><span class="cell ln"></span><span class="cell ln"><button class="exp" aria-label="Collapse"><svg><use href="#chev-d"/></svg></button></span><span class="item sel"><svg><use href="#pocket"/></svg>Pocket</span></div>
              <div class="row"><span class="cell ln"></span><span class="cell ln"></span><span class="cell end"></span><span class="item"><svg><use href="#t-sketch"/></svg>Sketch002</span></div>
              <div class="row"><span class="cell ln"></span><span class="cell ln"><button class="exp" aria-label="Expand"><svg><use href="#chev-r"/></svg></button></span><span class="item"><svg><use href="#t-pocket"/></svg>Pocket003</span></div>
              <div class="row"><span class="cell ln"></span><span class="cell ln"><button class="exp" aria-label="Collapse"><svg><use href="#chev-d"/></svg></button></span><span class="item"><svg><use href="#t-pad"/></svg>Adding Symbol</span></div>
              <div class="row"><span class="cell ln"></span><span class="cell ln"></span><span class="cell end"></span><span class="item"><svg><use href="#t-sketch"/></svg>Symbol001</span></div>
              <div class="row"><span class="cell ln"></span><span class="cell ln"><button class="exp" aria-label="Expand"><svg><use href="#chev-r"/></svg></button></span><span class="item"><svg><use href="#t-pocket"/></svg>Pocket004</span></div>
              <div class="row"><span class="cell ln"></span><span class="cell ln"><button class="exp" aria-label="Expand"><svg><use href="#chev-r"/></svg></button></span><span class="item"><svg><use href="#t-cut"/></svg>Cut</span></div>
              <div class="row"><span class="cell ln"></span><span class="cell ln"></span><span class="item"><svg><use href="#t-pad"/></svg></span></div>
            </div>
          </div>
          <div class="scroll"><svg><use href="#chev-u"/></svg><div class="groove"><i class="thumb tree-thumb"></i></div><svg><use href="#chev-d"/></svg></div>
        </section>

        <section class="props">
          <div class="props-in">
            <table>
              <colgroup><col class="c-gut"><col class="c-name"><col></colgroup>
              <thead><tr><th colspan="2">Property</th><th>Value</th></tr></thead>
              <tbody>
                <tr><td class="gut"></td><td>Line Color</td><td><i class="sw dark"></i>[25, 25, 25]</td></tr>
                <tr><td class="gut"></td><td>Line Width</td><td>2.00</td></tr>
                <tr><td class="gut"></td><td>Point Color</td><td><i class="sw dark"></i>[25, 25, 25]</td></tr>
                <tr><td class="gut"></td><td>Point Size</td><td>2.00</td></tr>
                <tr><td class="gut"></td><td>Selectable</td><td>true</td></tr>
                <tr><td class="gut"></td><td class="hl">Shape Color</td><td class="edit"><div><i class="sw"></i><button class="pick" aria-label="Choose shape color"><i></i></button></div></td></tr>
                <tr><td class="gut"></td><td>Transpare...</td><td>0</td></tr>
              </tbody>
            </table>
            <div class="scroll"><svg><use href="#chev-u"/></svg><div class="groove"><i class="thumb prop-thumb"></i></div><svg><use href="#chev-d"/></svg></div>
          </div>
        </section>
        <div class="tabs low"><button class="tab on">View</button><button class="tab">Data</button></div>
      </div>
    </aside>

    <section class="mdi">
      <div class="viewport">
        <svg class="ring" viewBox="0 0 870 720" role="img" aria-label="Ring model">
          <defs>
            <linearGradient id="r-side" gradientUnits="userSpaceOnUse" x1="425" y1="0" x2="812" y2="0"><stop offset="0" stop-color="#c8ffc8"/><stop offset=".25" stop-color="#d0ffd0"/><stop offset=".55" stop-color="#bcffbc"/><stop offset=".75" stop-color="#9cff9c"/><stop offset=".9" stop-color="#74ff74"/><stop offset="1" stop-color="#48f748"/></linearGradient>
            <linearGradient id="r-wall" gradientUnits="userSpaceOnUse" x1="200" y1="0" x2="770" y2="0"><stop offset="0" stop-color="#62ff62"/><stop offset=".12" stop-color="#84ff84"/><stop offset=".35" stop-color="#c0ffc0"/><stop offset=".52" stop-color="#d2ffd2"/><stop offset=".75" stop-color="#b2ffb2"/><stop offset=".9" stop-color="#7dff7d"/><stop offset="1" stop-color="#42f542"/></linearGradient>
            <linearGradient id="r-head" gradientUnits="userSpaceOnUse" x1="160" y1="220" x2="400" y2="620"><stop offset="0" stop-color="#62f562"/><stop offset=".12" stop-color="#92ff92"/><stop offset=".4" stop-color="#d0ffd0"/><stop offset=".65" stop-color="#ccffcc"/><stop offset=".85" stop-color="#8aff8a"/><stop offset="1" stop-color="#3fe83f"/></linearGradient>
          </defs>
          <g stroke="#1fa71f" stroke-width="5" stroke-linejoin="round">
            <path fill="url(#r-side)" d="M812 242A347 200 0 0 1 425 441L445 510 422 581C450 582 440 582 465 582A347 200 0 0 0 812 382z"/>
            <path fill="#9cff9c" d="M118 242A347 200 0 0 1 812 242A347 200 0 0 1 425 441L495 398A287 166 0 1 0 200 204L118 248z"/>
            <path fill="url(#r-wall)" d="M200 202A287 166 0 0 1 770 232Q768 272 741 303A287 166 0 0 0 300 245z"/>
            <path fill="url(#r-head)" stroke="none" d="M118 248L200 199C300 234 420 310 495 398L425 441C450 475 452 530 422 581L447 588 330 656 130 300z"/>
            <path fill="none" d="M118 248L200 199C300 234 420 310 495 398L425 441C450 475 452 530 422 581L447 588 330 656M369 555L445 514M709 384V526"/>
            <path fill="#9cff9c" d="M130 248C60 250 44 310 45 375C50 520 180 672 280 672C340 670 369 620 369 555C366 400 240 250 130 248z"/>
          </g>
          <path fill="#2cf52c" d="M492 394h8v8h-8zM421 437h8v8h-8zM441 510h8v8h-8zM365 551h8v8h-8zM704 380h8v8h-8zM705 522h8v8h-8zM679 346h10v7h-10zM420 578h8v8h-8z"/>
        </svg>
        <svg class="axes" viewBox="0 0 50 71" role="img" aria-label="Axis cross">
          <path d="M16 38V20" stroke="#1c1c8c" stroke-width="2"/><path d="M16 14l3 10h-6z" fill="#1c1c8c"/>
          <path d="M16 38l14-8" stroke="#1d861d" stroke-width="1.500"/><path d="M31 28l-4 6-3-4z" fill="#1d861d"/>
          <path d="M16 38l14 8" stroke="#8c1c1c" stroke-width="1.500"/><path d="M36 49l-10-1 3-5z" fill="#8c1c1c"/>
          <text x="19" y="15">Z</text><text x="32" y="30">Y</text><text x="38" y="49">X</text>
        </svg>
      </div>
      <div class="doctabs">
        <div class="doc"><svg><use href="#freecad"/></svg><span>RL_ring : 1</span><button aria-label="Close tab"><svg><use href="#close"/></svg></button></div>
        <div class="doc"><svg><use href="#freecad"/></svg><span>BKL_ring : 1</span><button aria-label="Close tab"><svg><use href="#close"/></svg></button></div>
        <div class="doc"><svg><use href="#freecad"/></svg><span>BL_ring : 1</span><button aria-label="Close tab"><svg><use href="#close"/></svg></button></div>
        <div class="doc"><svg><use href="#freecad"/></svg><span>GL_ring : 1</span><button aria-label="Close tab"><svg><use href="#close"/></svg></button></div>
        <div class="doc"><svg><use href="#freecad"/></svg><span>IL_ring : 1</span><button aria-label="Close tab"><svg><use href="#close"/></svg></button></div>
        <div class="doc"><svg><use href="#freecad"/></svg><span>OL_ring : 1</span><button aria-label="Close tab"><svg><use href="#close"/></svg></button></div>
        <div class="doc"><svg><use href="#freecad"/></svg><span>VL_ring : 1</span><button aria-label="Close tab"><svg><use href="#close"/></svg></button></div>
        <div class="doc on"><svg><use href="#freecad"/></svg><span>WL_ring : 1</span><button aria-label="Close tab"><svg><use href="#close"/></svg></button></div>
        <div class="doc"><svg><use href="#freecad"/></svg><span>YL_ring : 1</span><button aria-label="Close tab"><svg><use href="#close"/></svg></button></div>
      </div>
    </section>
  </main>

  <footer class="status"><span>Valid</span><span>128.22 x 69.62 mm</span></footer>

  <div class="taskbar">
    <div class="launch">
      <button aria-label="Application launcher"><svg viewBox="0 0 20 20"><rect width="20" height="20" rx="3" fill="#2e62b8"/><rect x="1" y="1" width="18" height="9" rx="3" fill="#5b8fdc"/><path d="M10 3v12M16 3l-6 6 6 6" fill="none" stroke="#fff" stroke-width="2.400"/><circle cx="6" cy="11" r="3.500" fill="none" stroke="#fff" stroke-width="2" stroke-dasharray="2 1.500"/></svg></button>
      <button aria-label="Show desktop"><svg viewBox="0 0 20 20"><path d="M1 3h18v13H1z" fill="#2c5c94" stroke="#16273c"/><path d="M1.500 3.500H19L1.500 13z" fill="#5584b4"/><path d="M3 5h2v2H3zM3 9h2v2H3z" fill="#dce8f0"/><path d="M1 15h18v2H1z" fill="#333a42"/></svg></button>
      <button aria-label="Scrivener"><svg viewBox="0 0 20 20"><rect width="20" height="20" rx="4" fill="#dedede"/><path d="M13 0h3q4 0 4 4v12q0 4-4 4h-5c5-4 4-8 0-10s-4-7 2-10z" fill="#1b1b1b"/><path d="M4 20c-3 0-4-1-4-4v-2c3 3 7 3 7 0z" fill="#555"/><path d="M15 5C11 1 5 4 8 8s7 5 4 8c-2 2-5 1-7-1" fill="none" stroke="#222" stroke-width="4"/><path d="M15 5C11 1 5 4 8 8s7 5 4 8c-2 2-5 1-7-1" fill="none" stroke="#fff" stroke-width="2.600"/></svg></button>
    </div>
    <div class="tasks">
      <button><svg viewBox="0 0 22 22"><path d="M5 0h17v16l-6 6H0V5z" fill="#10a5e2"/><path d="M16 6h-4a5 5 0 0 0 0 10h4" fill="none" stroke="#fff" stroke-width="3.200"/></svg><span>Cura</span></button>
      <button><svg viewBox="0 0 22 22"><path d="M3 1h16v20H3z" fill="#e9eff5" stroke="#567" stroke-width=".7"/><path d="M5 4h12v6H5zM5 12h12v7H5z" fill="#59a3ea"/><path d="M8 4h6v2H8zM8 13h6v2H8z" fill="#fff" stroke="#678" stroke-width=".6"/></svg><span>Lantern_rings ...</span></button>
      <button><svg viewBox="0 0 18 18"><use href="#freecad"/></svg><span>FreeCAD</span></button>
      <button><svg viewBox="0 0 22 22"><path d="M2 7l5 2 6-3 4 3-1 5 5 5-8-3-6 1-3-4z" fill="#6c645a"/><circle cx="7" cy="9" r="3" fill="#fff"/><circle cx="13" cy="8" r="3" fill="#fff"/><circle cx="7" cy="9" r="1.200"/><circle cx="13" cy="8" r="1.200"/><path d="M2 12l3 2 9 1-8 2z" fill="#282420"/></svg><span>*[indigo] (impor...</span></button>
      <button><svg viewBox="0 0 22 22"><circle cx="11" cy="11" r="10.500" fill="#f7c92d"/><path d="M11 .5A10.500 10.500 0 0 0 2 5.500L6.500 13 11 6h9.200A10.500 10.500 0 0 0 11 .5z" fill="#df4335"/><path d="M2 5.500a10.500 10.500 0 0 0 8.500 16l4.700-8L7 14z" fill="#34a350"/><circle cx="11" cy="11" r="5" fill="#fff"/><circle cx="11" cy="11" r="4" fill="#4a86e8"/></svg><span>Edit Your Thing ...</span></button>
      <button><svg viewBox="0 0 22 22"><path d="M2 2h18v18H2z" fill="#30343a" stroke="#c9c9c9" stroke-width="1.600"/><path d="M4 6l3 2-3 2M8 10h4" fill="none" stroke="#eee"/></svg><span>f : bash — Kons...</span></button>
      <button><svg viewBox="0 0 22 22"><path d="M4 8c0-9 14-9 14 0v5l4 5-5 3H5l-5-2 4-6z" fill="#9866a4"/><circle cx="8" cy="8" r="2.800" fill="#fff"/><circle cx="14" cy="8" r="2.800" fill="#fff"/><circle cx="8.500" cy="8" r="1.200"/><circle cx="13.500" cy="8" r="1.200"/><path d="M9 12h8l-5 4z" fill="#f29a25"/><path d="M5 22l6-5 6 5z" fill="#fff"/></svg><span>Pidgin Internet ...</span></button>
      <button><svg viewBox="0 0 22 22"><circle cx="10" cy="12" r="9.500" fill="#3a8fd0"/><path d="M3 8c3-5 9-6 12-3" stroke="#8cc8f0" stroke-width="2" fill="none"/><path d="M21 1c-6 2-9 8-10 17l3-3c4-4 7-9 7-14z" fill="#d7ab66"/><path d="M19 5L11 19" stroke="#704e20"/></svg><span>Scribus 1.5.2</span></button>
    </div>
    <div class="tray">
      <button aria-label="Dropbox"><svg viewBox="0 0 20 20"><path d="M5 1l5 3 5-3 5 3-4 3 4 3-5 3-5-3-5 3-5-3 4-3-4-3zM5 14l5 3 4-3v3l-4 2-5-2z" fill="#fff"/><path d="M5 7l5-3 5 3-5 3z" fill="#111"/><circle cx="15" cy="15" r="4.500" fill="#2d8ee0"/></svg></button>
      <button aria-label="Bluetooth"><svg viewBox="0 0 20 20"><path d="M5 6l10 8-5 4.500v-17L15 6 5 14" fill="none" stroke="#e8e8e8" stroke-width="1.300"/></svg></button>
      <button aria-label="Updates"><svg viewBox="0 0 20 20"><path d="M10 1c3 2 5 2 8 2 1 8-3 13-8 16C5 16 1 11 2 3c3 0 5 0 8-2z" fill="#f2f2f2"/><circle cx="10" cy="9.500" r="5.800" fill="#4a7fc4"/><path d="M10 5.500v2M10 8.500V14" stroke="#dceaff" stroke-width="1.800"/></svg></button>
      <button aria-label="USB"><svg viewBox="0 0 20 20"><circle cx="10" cy="10" r="8.700" fill="none" stroke="#cfcfcf" stroke-width="1"/><path d="M1 10h18M6 10l4-5h3M8 10l4 5h3" fill="none" stroke="#fff" stroke-width="1.500"/><circle cx="4" cy="10" r="2" fill="#fff"/><circle cx="13" cy="5" r="1.500" fill="#fff"/></svg></button>
      <button aria-label="Account"><svg viewBox="0 0 20 20"><circle cx="10" cy="6" r="5" fill="#3fae76"/><path d="M7.500 6l2 2 3.500-4" fill="none" stroke="#fff" stroke-width="1.400"/><path d="M3.500 18c0-6 13-6 13 0z" fill="none" stroke="#3fae76" stroke-width="1.500"/></svg></button>
      <button aria-label="Wi-Fi"><svg viewBox="0 0 20 20"><g fill="none" stroke="#e8e8e8" stroke-width="1.800"><path d="M1 8c5-5 13-5 18 0" opacity=".55"/><path d="M4 11c4-3.500 8-3.500 12 0"/><path d="M6.500 14c2.500-2 4.500-2 7 0"/></g><circle cx="10" cy="17" r="1.600" fill="#fff"/></svg></button>
      <button aria-label="Clipboard"><svg viewBox="0 0 20 20"><path d="M6 1l6 13M14 1L8 14" stroke="#eee" stroke-width="2.400"/><circle cx="5.500" cy="16" r="2.600" fill="none" stroke="#eee" stroke-width="2"/><circle cx="14.500" cy="16" r="2.600" fill="none" stroke="#eee" stroke-width="2"/></svg></button>
      <button aria-label="Volume"><svg viewBox="0 0 20 20"><path d="M1 8h3l4-4v12l-4-4H1z" fill="#fff"/><path d="M10 7q2 3 0 6M12.500 5.500q3 4.500 0 9M15 4q4 6 0 12" fill="none" stroke="#e8e8e8" stroke-width="1.300"/></svg></button>
      <button class="up" aria-label="Show hidden icons"><svg viewBox="0 0 20 20"><path d="M4 13l6-6 6 6z" fill="#fff"/></svg></button>
      <time>5:17 PM</time>
    </div>
  </div>
</div>
</body>
</html>
```
FILE: styles.css
```css
* { box-sizing: border-box; }
body {
  margin: 0;
  font: 13px/18px "Noto Sans", sans-serif;
  color: #111;
  background: #e0dfd8;
}
button {
  margin: 0;
  padding: 0;
  border: 0;
  background: none;
  font: inherit;
  color: inherit;
}
svg { display: block; flex: none; }
h1, h2 { margin: 0; font: inherit; }
.sprite { position: absolute; width: 0; height: 0; }

.app { display: flex; flex-direction: column; height: 100vh; overflow: hidden; }

.titlebar {
  display: grid;
  grid-template-columns: 1fr auto 1fr;
  align-items: center;
  height: 29px;
  padding: 0 5px;
  color: #fff;
  background: linear-gradient(#5aa7c6, #4686a0);
  border-bottom: 1px solid #6da3b6;
}
.logo { width: 18px; height: 18px; }
.winctl { display: flex; justify-content: flex-end; gap: 6px; }
.winctl svg { width: 18px; height: 18px; }

.menubar { display: flex; align-items: center; gap: 1px; height: 30px; }
.menubar button { padding: 0 10px; }
.menubar u { text-underline-offset: 3px; }

.toolrow { display: flex; align-items: center; height: 38px; overflow: hidden; }
.toolrow > * { flex: none; }
.tb { display: grid; place-items: center; width: 34px; height: 34px; }
.tb svg { width: 24px; height: 24px; }
.drop { display: grid; place-items: center; width: 20px; height: 34px; }
.drop svg { width: 12px; height: 12px; }
.sep { width: 8px; height: 34px; background: linear-gradient(#a3a29d, #a3a29d) 4px 0 / 1px 100% no-repeat; }
.grip {
  width: 15px;
  height: 34px;
  background:
    linear-gradient(#a3a29d, #a3a29d) 8px 0 / 1px 100% no-repeat,
    linear-gradient(#a3a29d, #a3a29d) 11px 0 / 1px 100% no-repeat;
}
.grip.first { margin-left: -3px; }
.more { display: grid; place-items: center; width: 28px; height: 34px; padding-left: 6px; }
.more.wide { width: 36px; padding-left: 14px; }
.more svg { width: 16px; height: 16px; }
.combo {
  display: flex;
  align-items: center;
  width: 172px;
  height: 30px;
  padding: 0 4px 0 6px;
  border: 1px solid #9f9e9a;
  border-radius: 3px;
  background: linear-gradient(#eae9e3, #deddd5);
}
.combo-icon { width: 16px; height: 16px; }
.combo-arrow { width: 12px; height: 12px; }
.combo select {
  flex: 1;
  min-width: 0;
  padding: 0 0 0 3px;
  appearance: none;
  border: 0;
  background: none;
  font: inherit;
  color: inherit;
}

.work { display: grid; grid-template-columns: 366px minmax(0, 1fr); flex: 1; min-height: 0; }

.dock {
  display: flex;
  flex-direction: column;
  min-height: 0;
  margin: 1px 2px 1px 1px;
  padding: 0 1px 1px;
  border: 1px solid #a6a5a0;
  border-radius: 3px;
  background: #eae9e4;
}
.dock-title { display: flex; align-items: center; height: 29px; padding: 0 5px 4px 3px; }
.dock-title h2 { flex: 1; }
.dock-title button + button { margin-left: 7px; }
.dock-title svg { width: 16px; height: 16px; }
.tabs { display: flex; flex: none; height: 28px; }
.tabs.top { margin-bottom: -1px; z-index: 1; }
.tab { width: 80px; background: #bbbab6; }
.tab.on { border: 1px solid #a6a5a0; background: #eae9e4; }
.top .tab { padding-bottom: 1px; border-radius: 2px 2px 0 0; }
.top .tab.on { padding-bottom: 3px; border-bottom: 0; }
.top .tab:not(.on) { height: 27px; }
.low { height: 27px; }
.low .tab { padding-bottom: 2px; border-radius: 0 0 2px 2px; }
.low .tab.on { border-top: 0; }
.pane {
  display: flex;
  flex-direction: column;
  flex: 1;
  min-height: 0;
  padding: 3px;
  border: 1px solid #a6a5a0;
  border-radius: 0 2px 2px 2px;
}
.tree {
  display: flex;
  flex: 1;
  min-height: 0;
  overflow: hidden;
  border: 1px solid #456471;
  border-radius: 3px;
  background: #fff;
}
.tree-main { flex: 1; min-width: 0; }
.tree-head {
  height: 30px;
  padding: 6px;
  border-bottom: 1px solid #c9c8c2;
  background: #e6e6dd;
}
.row { display: flex; height: 24px; }
.cell { display: grid; place-items: center; width: 20px; }
.ln { background: linear-gradient(#bab9b5, #bab9b5) 9px 0 / 1px 100% no-repeat; }
.end {
  background:
    linear-gradient(#bab9b5, #bab9b5) 9px 0 / 1px 12px no-repeat,
    linear-gradient(#bab9b5, #bab9b5) 9px 11px / 11px 1px no-repeat;
}
.exp { width: 16px; height: 14px; background: #fff; }
.exp svg { width: 14px; height: 14px; margin: 0 auto; }
.item { display: flex; align-items: center; gap: 6px; height: 23px; padding-left: 3px; }
.item svg { width: 16px; height: 16px; }
.item.bold { font-weight: 700; }
.item.sel { min-width: 127px; color: #fff; background: #7b9fae; }
.scroll { display: flex; flex-direction: column; align-items: center; flex: none; width: 20px; padding: 3px 0 2px; background: #fff; }
.scroll svg { width: 14px; height: 15px; }
.groove { flex: 1; width: 10px; margin: 2px 0 4px; border-radius: 5px; background: #b1b1b1; }
.thumb { display: block; width: 10px; border-radius: 5px; }
.tree-thumb { height: 79%; margin-top: 38px; background: #456471; }
.prop-thumb { height: 40%; margin-top: 70px; background: #5b5b5b; }

.props { margin-top: 3px; padding: 3px; border: 1px solid #a6a5a0; border-radius: 3px; }
.props-in { display: flex; height: 192px; overflow: hidden; border: 1px solid #9f9e9a; border-radius: 2px; background: #fff; }
table { flex: 1; align-self: flex-start; table-layout: fixed; width: 100%; border-collapse: separate; border-spacing: 0; }
.c-gut { width: 20px; }
.c-name { width: 80px; }
th {
  height: 30px;
  padding: 0 6px;
  text-align: left;
  font-weight: 400;
  border-right: 1px solid #b9b8b2;
  border-bottom: 1px solid #cfcec6;
  background: #e6e6dd;
}
td {
  height: 23px;
  padding: 0 3px;
  white-space: nowrap;
  border-right: 1px solid #b9b8b2;
  border-bottom: 1px solid #b9b8b2;
}
tr:nth-child(odd) td { background-color: #fafaf9; }
tr:nth-child(even) td { background-color: #fff; }
td.gut {
  border: 0;
  background:
    linear-gradient(#bab9b5, #bab9b5) 9px 0 / 1px 100% no-repeat,
    linear-gradient(#bab9b5, #bab9b5) 9px 11px / 11px 1px no-repeat;
}
tr td.hl { color: #fff; background-color: #7b9fae; }
.sw { display: inline-block; width: 16px; height: 16px; margin-right: 6px; vertical-align: middle; background: #cacaca; }
.sw.dark { background: #191919; }
td.edit { padding-right: 0; }
.edit div { display: flex; align-items: center; }
.edit .sw { flex: none; margin-right: 4px; }
.pick {
  display: grid;
  place-items: center;
  flex: 1;
  height: 21px;
  border: 1px solid #9f9e9a;
  border-radius: 2px;
  background: linear-gradient(#e9e9e2, #dcdbd2);
}
.pick i { width: 28px; height: 12px; border: 1px solid #9a9a9a; background: #cacaca; }

.mdi { display: flex; flex-direction: column; min-width: 0; }
.viewport { position: relative; flex: 1; overflow: hidden; background: linear-gradient(#333365, #9797aa); }
.ring { position: absolute; left: calc(50% - 153px); top: calc(50% - 105px); width: 290px; height: 240px; }
.axes { position: absolute; right: 0; bottom: 0; width: 50px; height: 71px; font: 10px "Liberation Sans", sans-serif; }
.doctabs { display: flex; height: 28px; }
.doc {
  display: flex;
  align-items: center;
  padding: 0 7px 0 8px;
  border-right: 1px solid #8f8e8a;
  background: #b2b1ac;
}
.doc > svg { width: 15px; height: 15px; margin: 0 9px 2px 0; }
.doc span { white-space: nowrap; }
.doc button { margin-left: 9px; opacity: .85; }
.doc button svg { width: 16px; height: 16px; }
.doc.on { padding-right: 8px; background: #e0dfd8; border-bottom: 1px solid #a6a5a0; }
.doc:last-child { border-right: 0; border-radius: 0 0 3px 0; }

.status {
  display: flex;
  justify-content: space-between;
  align-items: center;
  height: 32px;
  padding: 0 6px;
  background: linear-gradient(#e0dfd8 78%, #b8b7b2);
  border-bottom: 1px solid #777;
}

.taskbar {
  display: flex;
  align-items: center;
  height: 35px;
  color: #eee;
  background:
    linear-gradient(90deg, transparent 8%, #7c8b80 16%, transparent 22%, #7c8b80 28%, #a9c0a9 31%, #7c8b80 50%, #777 58%, #555 65%, transparent 82%) 0 31px / 100% 1px no-repeat,
    radial-gradient(ellipse 100px 28px at 462px 32px, #8ea690 0, rgba(80, 115, 85, .7) 45%, transparent 100%),
    radial-gradient(ellipse 190px 40px at 690px 36px, #6d8560 0, rgba(75, 90, 65, .8) 50%, transparent 100%),
    radial-gradient(ellipse 120px 30px at 915px 16px, #2c2430, transparent),
    linear-gradient(90deg, #010303 0, #03100b 14%, #0f2615 24%, #254028 32%, #34492f 40%, #3c4733 47%, #17170f 54%, #141218 60%, #04060c 68%, #000 80%);
}
.launch { display: flex; gap: 14px; padding: 0 13px 0 8px; }
.launch svg { width: 20px; height: 20px; }
.tasks { display: flex; flex: 1; min-width: 0; }
.tasks button { display: flex; align-items: center; gap: 8px; flex: 0 1 140px; padding-left: 2px; white-space: nowrap; }
.tasks svg { width: 20px; height: 22px; }
.tray { display: flex; align-items: center; gap: 6px; padding-right: 10px; }
.tray svg { width: 20px; height: 20px; }
.tray .up { margin: 0 4px 0 2px; }
.tray time { font-size: 21px; line-height: 30px; }
```
